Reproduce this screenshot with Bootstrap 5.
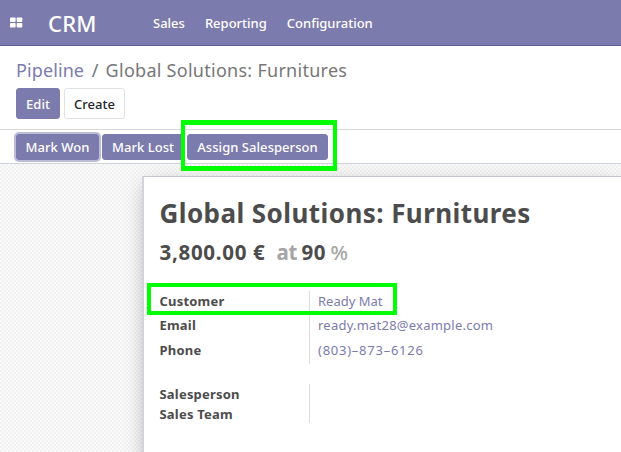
<!DOCTYPE html>
<html lang="en">
<head>
<meta charset="utf-8">
<meta name="viewport" content="width=device-width, initial-scale=1">
<title>CRM - Global Solutions: Furnitures</title>
<link href="https://cdn.jsdelivr.net/npm/bootstrap@5.3.0/dist/css/bootstrap.min.css" rel="stylesheet">
<style>
:root { --brand: #7c7bad; --ink: #4c4c4c; }
body { font-family: "Noto Sans", "Open Sans", sans-serif; font-size: 13px; line-height: 20px; color: var(--ink); height: 452px; overflow: hidden; }
a { color: var(--brand); text-decoration: none; }
.topbar { height: 46px; background: var(--brand); border-bottom: 1px solid #5f5e97; padding: 0 0 0 10px; }
.topbar .brand-name { font-size: 22px; line-height: 46px; margin-left: 25px; width: 105px; color: #fff; font-weight: 500; letter-spacing: .2px; }
.topbar .menu-link { color: #fff; font-size: 13px; line-height: 46px; font-weight: 500; }
.menu-list { gap: 20px; }
.control { height: 83px; padding: 12px 16px 0; }
.crumbs { font-size: 18px; line-height: 24px; color: #777; margin-bottom: 6px; letter-spacing: .27px; }
.crumbs a { letter-spacing: .1px; }
.crumbs .slash { margin: 0 7px 0 7.5px; color: #6c757d; }
.btn { --bs-btn-font-size: 13px; --bs-btn-border-radius: 3px; --bs-btn-padding-x: 0; --bs-btn-padding-y: 0; white-space: nowrap; font-weight: 500; letter-spacing: .05px; }
.btn-brand { --bs-btn-color: #fff; --bs-btn-bg: var(--brand); --bs-btn-border-color: var(--brand); }
.btn-plain { --bs-btn-color: #212529; --bs-btn-bg: #fff; --bs-btn-border-color: #dee2e6; }
.control .btn { height: 31px; line-height: 30px; }
.w-edit { width: 44px; } .w-create { width: 61px; }
.statusbar { height: 35px; padding: 4px 16px; gap: 3px; border-top: 1px solid #d9d9d9; border-bottom: 1px solid #cfd4da; }
.statusbar .btn { height: 26px; line-height: 24px; }
.w-won { width: 83px; } .w-lost { width: 82px; } .w-assign { width: 141px; }
.focused { box-shadow: 0 0 0 2px #bdbcd8; }
.marker { position: absolute; border: 4px solid #0f0; z-index: 2; pointer-events: none; }
.marker-assign { left: -6px; top: -14px; width: 156px; height: 51px; border-width: 5px 4px; }
.marker-customer { left: -13px; top: -7px; width: 250px; height: 32px; }
.canvas { height: 288px; padding: 12px 0 0 142px; background: repeating-conic-gradient(#f1f1f1 0 25%, #fafafa 0 50%) 0 0 / 4px 4px; }
.sheet { height: 290px; background: #fff; border: 1px solid #c8c8d3; border-left: 2px solid #d3d3de; border-right: 0; padding: 19px 0 0 15.5px; box-shadow: 0 5px 20px -5px rgba(0,0,0,.35); }
.record-title { font-size: 26px; line-height: 34px; font-weight: 700; margin: 0; white-space: nowrap; letter-spacing: .43px; }
.revenue { font-size: 20.5px; line-height: 28px; font-weight: 700; margin: 8px 0 24px; white-space: nowrap; }
.revenue .soft { color: #a5a5a5; }
.amount { width: 117px; letter-spacing: .7px; } .at-word { width: 25px; letter-spacing: -.3px; } .percent-value { width: 29px; letter-spacing: .5px; }
.percent-sign { font-weight: 500; }
.field-label { width: 149.5px; font-weight: 700; letter-spacing: .2px; }
.group { position: relative; top: 0; }
.group-values { border-left: 1px solid #ddd; padding-left: 8px; }
.mail { letter-spacing: .23px; } .tel { letter-spacing: .75px; }
.rows-wide { display: grid; grid-auto-rows: 24.5px; }
.rows-tight { display: grid; grid-auto-rows: 19.5px; }
.group-team { margin-top: 20px; }
.group-contact { padding-top: .5px; }
</style>
</head>
<body>
<nav class="topbar d-flex align-items-center">
  <svg width="13" height="11" viewBox="0 0 13 11" fill="#fff" aria-label="Apps"><rect y=".5" width="5.6" height="4.5" rx=".8"/><rect x="6.7" y=".5" width="5.6" height="4.5" rx=".8"/><rect y="6" width="5.6" height="4.5" rx=".8"/><rect x="6.7" y="6" width="5.6" height="4.5" rx=".8"/></svg>
  <a class="brand-name" href="#">CRM</a>
  <div class="menu-list d-flex"><a class="menu-link" href="#">Sales</a><a class="menu-link" href="#">Reporting</a><a class="menu-link" href="#">Configuration</a></div>
</nav>
<header class="control">
  <div class="crumbs d-flex text-nowrap"><a href="#">Pipeline</a><span class="slash">/</span><span>Global Solutions: Furnitures</span></div>
  <div class="d-flex gap-1"><button class="btn btn-brand w-edit">Edit</button><button class="btn btn-plain w-create">Create</button></div>
</header>
<div class="statusbar d-flex">
  <button class="btn btn-brand w-won focused">Mark Won</button>
  <button class="btn btn-brand w-lost">Mark Lost</button>
  <div class="position-relative"><button class="btn btn-brand w-assign">Assign Salesperson</button><span class="marker marker-assign"></span></div>
</div>
<main class="canvas">
  <article class="sheet">
    <h1 class="record-title">Global Solutions: Furnitures</h1>
    <div class="revenue d-flex"><span class="amount">3,800.00 €</span><span class="soft at-word">at</span><span class="percent-value">90</span><span class="soft percent-sign">%</span></div>
    <div class="group group-contact d-flex">
      <div class="field-label rows-wide"><span>Customer</span><span>Email</span><span>Phone</span></div>
      <div class="group-values rows-wide"><a href="#">Ready Mat</a><a class="mail" href="#">ready.mat28@example.com</a><a class="tel" href="#">(803)–873–6126</a></div>
      <span class="marker marker-customer"></span>
    </div>
    <div class="group group-team d-flex">
      <div class="field-label rows-tight"><span>Salesperson</span><span>Sales Team</span></div>
      <div class="group-values"></div>
    </div>
  </article>
</main>
<script src="https://cdn.jsdelivr.net/npm/bootstrap@5.3.0/dist/js/bootstrap.bundle.min.js"></script>
</body>
</html>
